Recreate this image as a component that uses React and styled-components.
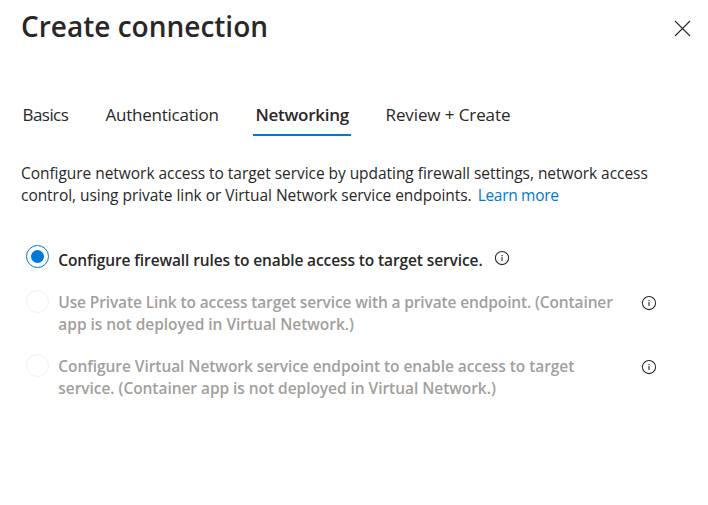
import React from "react";
import styled, { createGlobalStyle } from "styled-components";

const Global = createGlobalStyle`
  * { box-sizing: border-box; }
  body { margin: 0; background: #fff; color: #292827; font-family: "Open Sans", "Noto Sans", sans-serif; }
`;
const Line = styled.span`
  display: block;
  white-space: nowrap;
  letter-spacing: ${(p) => p.$ls || 0}px;
`;
const Panel = styled.main`
  width: 708px;
  height: 505px;
  overflow: hidden;
  display: flex;
  flex-direction: column;
`;
const Header = styled.header`
  height: 92px;
  padding: 6px 16px 0 21px;
  display: flex;
  justify-content: space-between;
`;
const Title = styled.h1`
  margin: 0;
  font-size: 28px;
  line-height: 40px;
  font-weight: 600;
`;
const Close = styled.button`
  width: 19px;
  height: 19px;
  margin: 13px 0 0;
  padding: 0;
  border: 0;
  background: none;

  svg { display: block; }
`;
const Tabs = styled.nav`
  display: flex;
  gap: 33px;
  height: 44px;
  padding-left: 21px;
`;
const Tab = styled.a`
  height: 44px;
  line-height: 45px;
  font-size: 17px;
  width: ${(p) => p.$w}px;
  padding-left: ${(p) => (p.$active ? 2.5 : 1.5)}px;
  white-space: nowrap;
  letter-spacing: ${(p) => p.$ls}px;
  font-weight: ${(p) => (p.$active ? 600 : 400)};
  border-bottom: ${(p) => (p.$active ? "2px solid #0078d4" : "0")};
`;
const Description = styled.p`
  margin: 26px 0 0 21px;
  font-size: 15.5px;
  line-height: 22px;
`;
const Link = styled.a`
  color: #0078d4;
  margin-left: 6px;
  letter-spacing: -0.3px;
`;
const Options = styled.div`
  margin-top: 39px;
  padding: 0 50px 0 26px;
`;
const Option = styled.label`
  display: flex;
  align-items: flex-start;
  height: ${(p) => p.$h}px;
  font-size: 15.5px;
  font-weight: 600;
  line-height: 22px;
  color: ${(p) => (p.$disabled ? "#a19f9d" : "#292827")};
`;
const Radio = styled.span`
  flex: none;
  display: grid;
  place-items: center;
  width: 23px;
  height: 23px;
  margin-right: 9px;
  border: 1px solid ${(p) => (p.$checked ? "#0078d4" : "#f0efee")};
  border-radius: 50%;

  &::after {
    content: "";
    width: 13px;
    height: 13px;
    border-radius: 50%;
    background: ${(p) => (p.$checked ? "#0078d4" : "transparent")};
  }
`;
const OptionText = styled.span`
  width: ${(p) => p.$w}px;
  padding-top: ${(p) => p.$top}px;
  padding-left: 0.3px;
`;
const InfoSvg = styled.svg`
  flex: none;
  width: 16px;
  height: 16px;
  margin-top: 5px;
  color: #292827;
`;

const Info = () => (
  <InfoSvg viewBox="0 0 16 16" aria-label="More information">
    <circle cx="8" cy="8" r="6.6" fill="none" stroke="currentColor" strokeWidth="1.05" />
    <path d="M8 6.8v4.2" stroke="currentColor" strokeWidth="1.1" />
    <path d="M8 4.9v1.1" stroke="currentColor" strokeWidth="1.1" />
  </InfoSvg>
);

const tabs = [
  { label: "Basics", w: 50, ls: -0.55 },
  { label: "Authentication", w: 116, ls: -0.24 },
  { label: "Networking", w: 98, ls: -0.28, active: true },
  { label: "Review + Create", w: 130, ls: -0.1 },
];

const options = [
  {
    lines: [["Configure firewall rules to enable access to target service.", -0.11]],
    h: 45, w: 436, top: 4, checked: true,
  },
  {
    lines: [
      ["Use Private Link to access target service with a private endpoint. (Container", -0.13],
      ["app is not deployed in Virtual Network.)", -0.03],
    ],
    h: 64, w: 583.4, top: 1,
  },
  {
    lines: [
      ["Configure Virtual Network service endpoint to enable access to target", -0.06],
      ["service. (Container app is not deployed in Virtual Network.)", -0.05],
    ],
    h: 64, w: 583.4, top: 1,
  },
];

export default function App() {
  return (
    <>
      <Global />
      <Panel>
        <Header>
          <Title>Create connection</Title>
          <Close aria-label="Close">
            <svg width="19" height="19">
              <path d="M2 2l15 15M17 2L2 17" stroke="#292827" strokeWidth="1.1" />
            </svg>
          </Close>
        </Header>
        <Tabs>
          {tabs.map((t) => (
            <Tab key={t.label} $w={t.w} $ls={t.ls} $active={t.active}>{t.label}</Tab>
          ))}
        </Tabs>
        <Description>
          <Line $ls={-0.046}>Configure network access to target service by updating firewall settings, network access</Line>
          <Line $ls={-0.046}>
            control, using private link or Virtual Network service endpoints.<Link>Learn more</Link>
          </Line>
        </Description>
        <Options>
          {options.map((o) => (
            <Option key={o.lines[0][0]} $h={o.h} $disabled={!o.checked}>
              <Radio $checked={o.checked} />
              <OptionText $w={o.w} $top={o.top}>
                {o.lines.map(([text, ls]) => <Line key={text} $ls={ls}>{text}</Line>)}
              </OptionText>
              <Info />
            </Option>
          ))}
        </Options>
      </Panel>
    </>
  );
}
